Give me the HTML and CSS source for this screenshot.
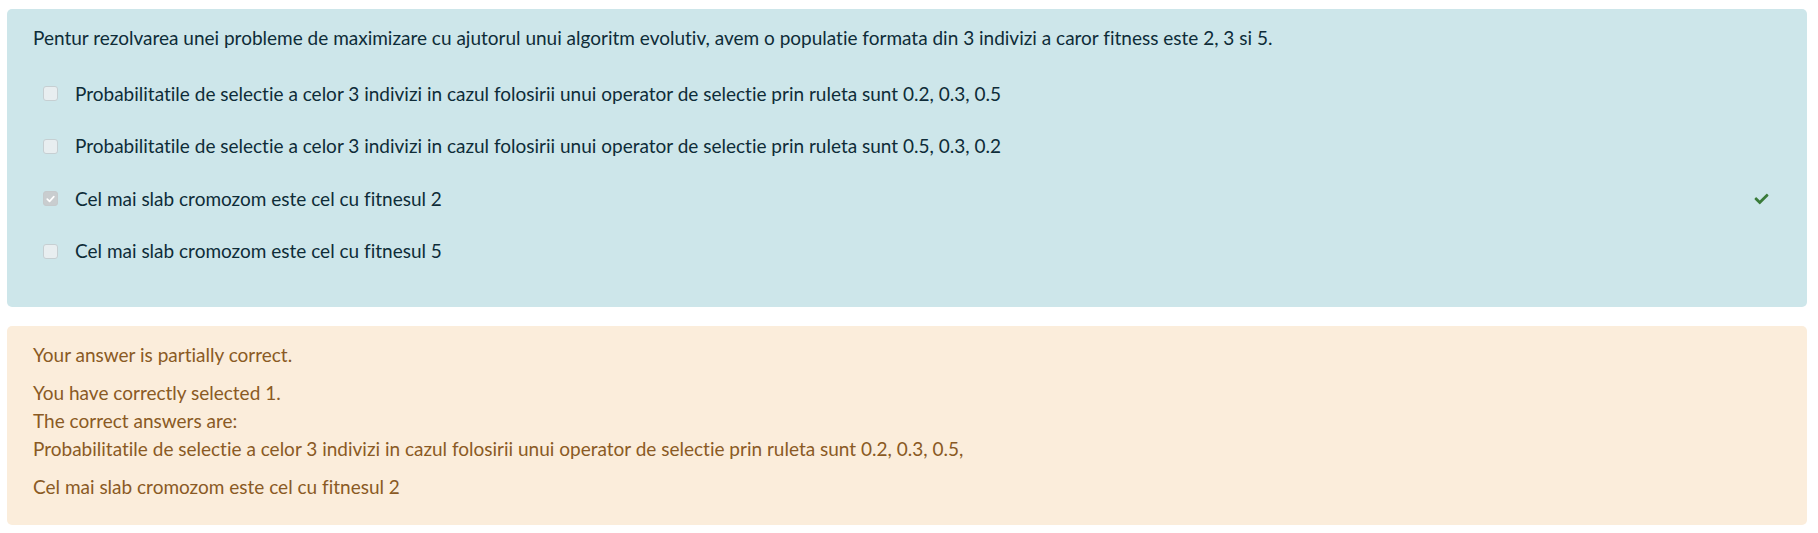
FILE: index.html
```html
<!DOCTYPE html>
<html lang="ro">
<head>
<meta charset="utf-8">
<title>Question</title>
<link rel="stylesheet" href="styles.css">
</head>
<body>
<div class="que">
  <div class="formulation">
    <div class="qtext">Pentur rezolvarea unei probleme de maximizare cu ajutorul unui algoritm evolutiv, avem o populatie formata din 3 indivizi a caror fitness este 2, 3 si 5.</div>
    <div class="answer">
      <div class="option">
        <span class="box"></span>
        <span class="label">Probabilitatile de selectie a celor 3 indivizi in cazul folosirii unui operator de selectie prin ruleta sunt 0.2, 0.3, 0.5</span>
      </div>
      <div class="option">
        <span class="box"></span>
        <span class="label">Probabilitatile de selectie a celor 3 indivizi in cazul folosirii unui operator de selectie prin ruleta sunt 0.5, 0.3, 0.2</span>
      </div>
      <div class="option">
        <span class="box checked"><svg viewBox="0 0 14 14" width="14" height="14"><path d="M3.5 7.2 L6 9.6 L10.6 4.4" fill="none" stroke="#fff" stroke-width="1.8" stroke-linecap="round" stroke-linejoin="round"/></svg></span>
        <span class="label">Cel mai slab cromozom este cel cu fitnesul 2</span>
        <svg class="tick" viewBox="0 0 512 512" width="17" height="14"><path fill="#3a7b3a" d="M173.9 439.4L7.5 273c-10-10-10-26.2 0-36.2l36.2-36.2c10-10 26.2-10 36.2 0L192 312.7 432.1 72.6c10-10 26.2-10 36.2 0l36.2 36.2c10 10 10 26.2 0 36.2L210.1 439.4c-10 10-26.2 10-36.2 0z"/></svg>
      </div>
      <div class="option">
        <span class="box"></span>
        <span class="label">Cel mai slab cromozom este cel cu fitnesul 5</span>
      </div>
    </div>
  </div>
  <div class="outcome">
    <div class="feedback">Your answer is partially correct.</div>
    <div class="numpartscorrect">You have correctly selected 1.</div>
    <div class="rightanswer">The correct answers are:<br>Probabilitatile de selectie a celor 3 indivizi in cazul folosirii unui operator de selectie prin ruleta sunt 0.2, 0.3, 0.5,
      <p class="last">Cel mai slab cromozom este cel cu fitnesul 2</p>
    </div>
  </div>
</div>
</body>
</html>
```
FILE: styles.css
```css
html, body {
  margin: 0;
  padding: 0;
  background: #ffffff;
}
body {
  font-family: Lato, "Noto Sans", sans-serif;
  font-size: 19px;
  line-height: 28px;
  font-variant-ligatures: none;
  font-feature-settings: "liga" 0, "clig" 0;
}
.que {
  padding: 9px 11px 9px 7px;
}
.formulation {
  background: #cde6ea;
  color: #0e2c38;
  border-radius: 5px;
  padding: 14.5px 26px 29.5px 26px;
}
.qtext {
  margin-bottom: 16px;
}
.answer {
  display: flex;
  flex-direction: column;
}
.option {
  display: flex;
  align-items: center;
  padding: 12.25px 0;
}
.box {
  width: 13px;
  height: 13px;
  border: 1px solid #c6cfd2;
  border-radius: 3px;
  background: #e8eef0;
  margin-left: 10px;
  margin-right: 17px;
  flex: none;
  display: flex;
  align-items: center;
  justify-content: center;
}
.box.checked {
  background: #c9cdcf;
  border-color: #c6cacc;
}
.box svg {
  display: block;
}
.label {
  flex: 1;
}
.tick {
  display: block;
  margin-right: 11px;
  flex: none;
}
.outcome {
  margin-top: 19px;
  background: #fbeddb;
  color: #8a5a24;
  border-radius: 5px;
  padding: 14.5px 26px 24px 26px;
}
.feedback {
  margin-bottom: 10.5px;
}
.last {
  margin: 9.5px 0 0 0;
}
```
